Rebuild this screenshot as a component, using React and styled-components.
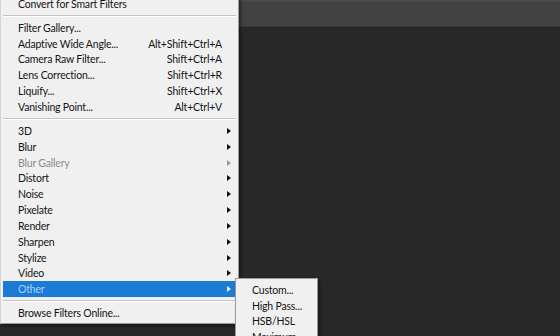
import React from "react";
import styled, { createGlobalStyle } from "styled-components";

const GlobalStyle = createGlobalStyle`
  html, body {
    margin: 0;
    padding: 0;
    background: #282828;
  }
  body {
    font-family: Lato, "Noto Sans", sans-serif;
  }
`;

const groups = [
  [{ label: "Convert for Smart Filters" }],
  [
    { label: "Filter Gallery..." },
    { label: "Adaptive Wide Angle...", keys: "Alt+Shift+Ctrl+A" },
    { label: "Camera Raw Filter...", keys: "Shift+Ctrl+A" },
    { label: "Lens Correction...", keys: "Shift+Ctrl+R" },
    { label: "Liquify...", keys: "Shift+Ctrl+X" },
    { label: "Vanishing Point...", keys: "Alt+Ctrl+V" },
  ],
  [
    { label: "3D", sub: true },
    { label: "Blur", sub: true },
    { label: "Blur Gallery", sub: true, disabled: true },
    { label: "Distort", sub: true },
    { label: "Noise", sub: true },
    { label: "Pixelate", sub: true },
    { label: "Render", sub: true },
    { label: "Sharpen", sub: true },
    { label: "Stylize", sub: true },
    { label: "Video", sub: true },
    { label: "Other", sub: true, active: true },
  ],
  [{ label: "Browse Filters Online..." }],
];

const otherItems = ["Custom...", "High Pass...", "HSB/HSL", "Maximum..."];

export default function App() {
  return (
    <>
      <GlobalStyle />
      <Page>
        <TopBar />
        <Workspace />
        <Menu>
          {groups.map((group, gi) => (
            <React.Fragment key={gi}>
              {gi > 0 && <Separator />}
              {group.map((item) => (
                <Row key={item.label} active={item.active} disabled={item.disabled}>
                  <Label>{item.label}</Label>
                  <Keys>{item.keys}</Keys>
                  <ArrowCell>{item.sub && <Arrow />}</ArrowCell>
                </Row>
              ))}
            </React.Fragment>
          ))}
        </Menu>
        <SubMenu>
          {otherItems.map((t) => (
            <SubRow key={t}>{t}</SubRow>
          ))}
        </SubMenu>
      </Page>
    </>
  );
}

const Page = styled.div`
  position: relative;
  width: 560px;
  height: 336px;
  overflow: hidden;
  display: flex;
  flex-direction: column;
  background: #282828;
`;

const TopBar = styled.div`
  height: 24px;
  border-top: 2px solid #4b4b4b;
  background: #424242;
  border-bottom: 1px solid #383838;
`;

const Workspace = styled.div`
  flex: 1;
  background: #282828;
`;

const Menu = styled.div`
  position: absolute;
  top: -6px;
  left: 0;
  width: 237px;
  padding: 1px 0 2px;
  background: #f0f0f0;
  border: 1px solid #9a9a9a;
  border-left-color: #d4d4d4;
  box-shadow: 2px 2px 3px rgba(0, 0, 0, 0.4);
`;

const Row = styled.div`
  display: grid;
  grid-template-columns: 1fr auto 14px;
  align-items: center;
  height: 15.85px;
  margin: 0 2px;
  padding-left: 15px;
  font-size: 10.5px;
  letter-spacing: -0.2px;
  color: ${({ disabled, active }) =>
    active ? "#a8d2f6" : disabled ? "#8c8c8c" : "#151515"};
  background: ${({ active }) => (active ? "#1c7bd4" : "transparent")};
  --arrow: ${({ disabled, active }) =>
    active ? "#e8f2fc" : disabled ? "#9a9a9a" : "#111"};
`;

const Label = styled.span`
  white-space: nowrap;
`;

const Keys = styled.span`
  white-space: nowrap;
  text-align: right;
`;

const ArrowCell = styled.span`
  display: flex;
  justify-content: center;
  align-items: center;
`;

const Arrow = styled.span`
  width: 0;
  height: 0;
  border-top: 3.5px solid transparent;
  border-bottom: 3.5px solid transparent;
  border-left: 4px solid var(--arrow);
`;

const Separator = styled.div`
  height: 1px;
  margin: 3px 2px 3px 2px;
  background: #c5c5c5;
  border-bottom: 1px solid #ffffff;
`;

const SubMenu = styled.div`
  position: absolute;
  top: 278px;
  left: 235px;
  width: 81px;
  padding-top: 3px;
  background: #f0f0f0;
  border: 1px solid #9a9a9a;
  box-shadow: 2px 2px 3px rgba(0, 0, 0, 0.4);
`;

const SubRow = styled.div`
  height: 15.8px;
  display: flex;
  align-items: center;
  padding-left: 16px;
  font-size: 10.5px;
  letter-spacing: -0.2px;
  color: #151515;
  white-space: nowrap;
`;
